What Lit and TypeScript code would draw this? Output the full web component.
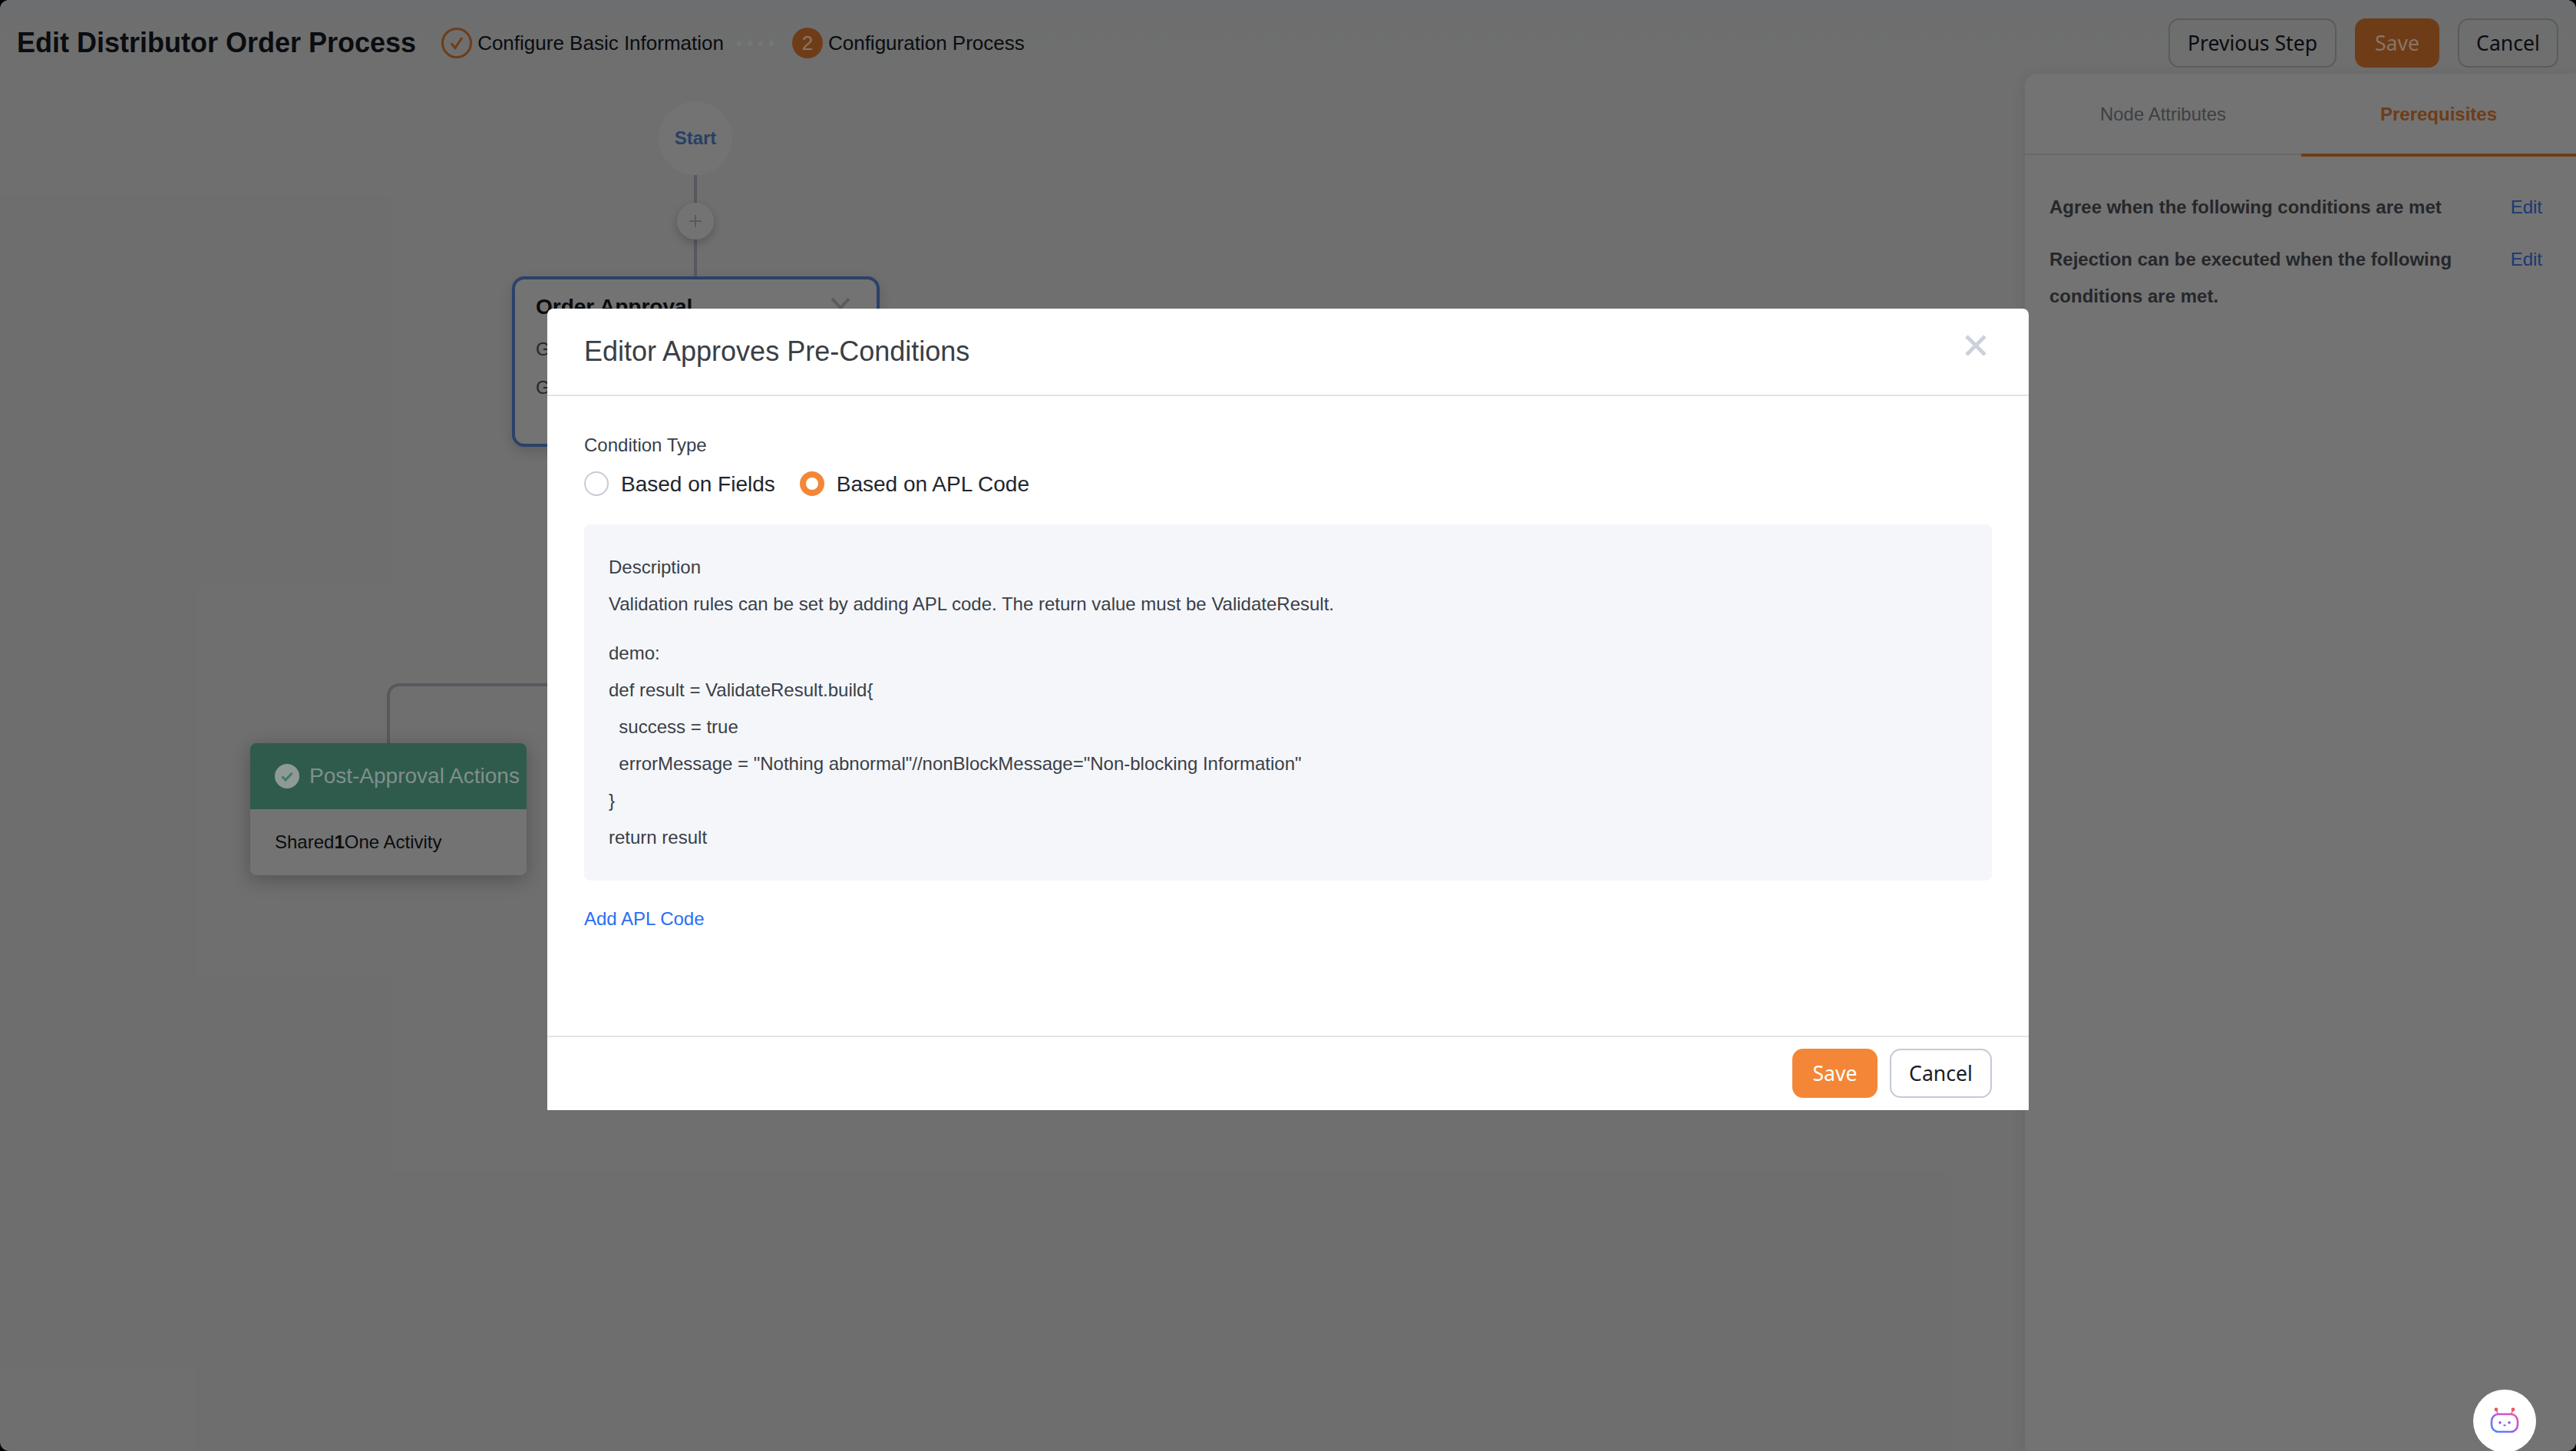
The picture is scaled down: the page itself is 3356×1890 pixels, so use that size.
import { LitElement, html, css } from "lit";
import { customElement } from "lit/decorators.js";

@customElement("app-root")
export class AppRoot extends LitElement {
  static styles = css`
    :host { display: block; width: 100%; height: 100vh; position: relative; overflow: hidden; background: #000; font-family: "Liberation Sans", Arial, sans-serif; }
    * { box-sizing: border-box; }
    .page { height: 100%; display: flex; flex-direction: column; background: #f5f5f5; border-radius: 12px; overflow: hidden; }
    .top { height: 96px; flex: none; display: flex; align-items: center; padding: 16px 23px 0 22px; background: linear-gradient(#f2f4f7, #f5f5f5); }
    .title { font-size: 36px; font-weight: 700; color: #181c25; margin-right: 33px; white-space: nowrap; }
    .step { display: flex; align-items: center; gap: 7px; font-size: 26px; color: #181c25; white-space: nowrap; }
    .ic { width: 40px; height: 40px; border-radius: 50%; display: flex; align-items: center; justify-content: center; }
    .ic.done { border: 3px solid #f38737; }
    .ic.now { background: #f38737; font-size: 26px; }
    .raised { position: relative; z-index: 1; }
    .ic.now span { color: #8a7565; }
    .dots { display: flex; gap: 8px; margin: 0 24px 0 17px; }
    .dots i { width: 6px; height: 7px; border-radius: 50%; background: #747679; }
    .spacer { flex: 1; }
    .btn { height: 64px; border-radius: 14px; border: 2px solid #c5cad6; background: #fff; color: #181c25; font-family: "Noto Sans", sans-serif; font-size: 26.6px; display: flex; align-items: center; justify-content: center; }
    .btn.pri { background: #f38737; border-color: #f38737; color: #fff; }
    .top .prev { width: 219px; margin-right: 24px; background: transparent; }
    .top .sv { width: 110px; margin-right: 24px; }
    .top .sv span { color: #8a7565; }
    .top .cn { width: 131px; background: transparent; }
    .main { flex: 1; display: flex; min-height: 0; }
    .canvas { flex: 1; position: relative; }
    .startn { position: absolute; left: 858px; top: 36px; width: 96px; height: 96px; border-radius: 50%; background: #fff; display: flex; align-items: center; justify-content: center; color: #5a8ee0; font-size: 24px; font-weight: 700; }
    .vline { position: absolute; left: 904px; width: 4px; background: #bfc5cf; }
    .plus { position: absolute; left: 882px; top: 168px; width: 48px; height: 48px; border-radius: 50%; background: #fff; box-shadow: 0 4px 12px rgba(0,0,0,.2); display: flex; align-items: center; justify-content: center; }
    .node { position: absolute; left: 667px; top: 264px; width: 479px; height: 222px; border: 4px solid #5f92e8; border-radius: 16px; background: #fff; padding: 16px 27px; box-shadow: 0 6px 16px rgba(0,0,0,.15); }
    .node .nm { font-size: 28px; font-weight: 700; color: #181c25; line-height: 40px; margin-bottom: 10px; }
    .node .chev { position: absolute; right: 34px; top: 23px; }
    .node .g { font-size: 24px; color: #555; line-height: 50px; }
    .conn { position: absolute; left: 504px; top: 794px; width: 300px; height: 78px; border-left: 4px solid #bfc5cf; border-top: 4px solid #bfc5cf; border-top-left-radius: 16px; }
    .card { position: absolute; left: 326px; top: 872px; width: 360px; height: 172px; border-radius: 8px; background: #fff; box-shadow: 0 6px 24px rgba(0,0,0,.25); overflow: hidden; }
    .card .hd { height: 86px; background: #68c9ac; display: flex; align-items: center; gap: 13px; padding-left: 32px; font-size: 28px; white-space: nowrap; }
    .card .hd span { color: #80908a; }
    .card .bd { height: 86px; display: flex; align-items: center; padding-left: 32px; font-size: 24px; color: #181c25; }
    .card .bd b { font-weight: 700; }
    .panel { width: 718px; flex: none; background: #fff; border-radius: 16px 0 0 0; box-shadow: -4px 0 16px rgba(0,0,0,.06); }
    .tabs { height: 106px; display: flex; border-bottom: 2px solid #e8e9ec; }
    .tab { flex: 1; display: flex; align-items: center; justify-content: center; font-size: 24px; color: #8a8f98; padding-top: 2px; }
    .tab.on { flex: 0 0 358px; color: #f38737; font-weight: 700; border-bottom: 4px solid #f38737; margin-bottom: -4px; }
    .cond { padding: 0 44px 0 32px; }
    .cond .first { margin-top: 44px; }
    .cond .second { margin-top: 20px; }
    .row { display: flex; justify-content: space-between; font-size: 24px; line-height: 48px; color: #545861; font-weight: 700; }
    .row .t { width: 560px; }
    .row a { color: #3a80ff; font-weight: 400; }
    .mask { position: absolute; inset: 0; background: rgba(0,0,0,.55); }
    .modal { position: absolute; z-index: 2; left: 713px; top: 402px; width: 1930px; height: 1044px; background: #fff; border-radius: 8px 8px 0 0; display: flex; flex-direction: column; }
    .mh { height: 114px; flex: none; border-bottom: 2px solid #e1e3e8; display: flex; align-items: center; justify-content: space-between; padding: 0 55px 0 48px; }
    .mh .tt { font-size: 36px; color: #3a3e46; margin-top: -1px; }
    .mh svg { margin-top: -16px; }
    .mb { flex: 1; padding: 48px 48px 0; }
    .lab { font-size: 24px; color: #3a3f47; line-height: 32px; height: 32px; }
    .radios { display: flex; align-items: center; height: 32px; margin-top: 18px; font-size: 28px; color: #22262e; }
    .radios span.tx { padding-top: 2px; }
    .r { width: 32px; height: 32px; border-radius: 50%; border: 2px solid #c5cad6; margin-right: 16px; flex: none; }
    .r.on { border: 8px solid #f38737; }
    .r2 { margin-left: 32px; }
    .desc { margin-top: 37px; height: 464px; background: #f4f6fa; border-radius: 8px; padding: 32px; font-size: 24px; line-height: 48px; color: #3a3f47; }
    .desc .gap { height: 16px; }
    .add { margin-top: 30px; font-size: 24px; line-height: 40px; color: #2a6df4; }
    .mf { height: 97px; flex: none; border-top: 2px solid #e1e3e8; display: flex; align-items: flex-start; justify-content: flex-end; gap: 16px; padding: 15px 48px 0; }
    .mf .sv { width: 111px; }
    .mf .cn { width: 133px; }
    .bot { position: absolute; z-index: 2; left: 3222px; top: 1810px; width: 82px; height: 82px; border-radius: 50%; background: #fff; display: flex; align-items: center; justify-content: center; }
  `;

  render() {
    return html`
      <div class="page">
        <div class="top">
          <div class="title">Edit Distributor Order Process</div>
          <div class="step">
            <span class="ic done"><svg width="22" height="22" viewBox="0 0 22 22" fill="none" stroke="#f38737" stroke-width="3"><path d="M4 11.5l5 6L18 4"/></svg></span>
            Configure Basic Information
          </div>
          <div class="dots raised"><i></i><i></i><i></i><i></i></div>
          <div class="step"><span class="ic now"><span class="raised">2</span></span>Configuration Process</div>
          <div class="spacer"></div>
          <div class="btn prev">Previous Step</div>
          <div class="btn pri sv"><span class="raised">Save</span></div>
          <div class="btn cn">Cancel</div>
        </div>
        <div class="main">
          <div class="canvas">
            <div class="vline" style="top:132px;height:132px"></div>
            <div class="startn">Start</div>
            <div class="plus"><svg width="20" height="20" viewBox="0 0 20 20" stroke="#c4c8d0" stroke-width="2"><path d="M10 2v16M2 10h16"/></svg></div>
            <div class="node">
              <div class="nm">Order Approval</div>
              <svg class="chev" width="26" height="16" viewBox="0 0 26 16" fill="none" stroke="#c6c9cf" stroke-width="4"><path d="M2 2l11 12L24 2"/></svg>
              <div class="g">G</div>
              <div class="g">G</div>
            </div>
            <div class="conn"></div>
            <div class="card">
              <div class="hd">
                <svg class="raised" width="32" height="32" viewBox="0 0 32 32"><circle cx="16" cy="16" r="16" fill="#8f9a95"/><path d="M9.5 16.5l4.5 4.5 8.5-9" fill="none" stroke="#3c7a66" stroke-width="3"/></svg>
                <span class="raised">Post-Approval Actions</span>
              </div>
              <div class="bd"><span>Shared<b>1</b>One Activity</span></div>
            </div>
          </div>
          <div class="panel">
            <div class="tabs"><div class="tab">Node Attributes</div><div class="tab on">Prerequisites</div></div>
            <div class="cond">
              <div class="row first"><span class="t">Agree when the following conditions are met</span><a>Edit</a></div>
              <div class="row second"><span class="t">Rejection can be executed when the following conditions are met.</span><a>Edit</a></div>
            </div>
          </div>
        </div>
      </div>
      <div class="mask"></div>
      <div class="modal">
        <div class="mh">
          <div class="tt">Editor Approves Pre-Conditions</div>
          <svg width="28" height="28" viewBox="0 0 28 28" stroke="#ccd2dc" stroke-width="5"><path d="M2 2l24 24M26 2L2 26"/></svg>
        </div>
        <div class="mb">
          <div class="lab">Condition Type</div>
          <div class="radios">
            <span class="r"></span><span class="tx">Based on Fields</span>
            <span class="r on r2"></span><span class="tx">Based on APL Code</span>
          </div>
          <div class="desc">
            <div>Description</div>
            <div>Validation rules can be set by adding APL code. The return value must be ValidateResult.</div>
            <div class="gap"></div>
            <div>demo:</div>
            <div>def result = ValidateResult.build{</div>
            <div>&nbsp;&nbsp;success = true</div>
            <div>&nbsp;&nbsp;errorMessage = "Nothing abnormal"//nonBlockMessage="Non-blocking Information"</div>
            <div>}</div>
            <div>return result</div>
          </div>
          <div class="add">Add APL Code</div>
        </div>
        <div class="mf">
          <div class="btn pri sv">Save</div>
          <div class="btn cn">Cancel</div>
        </div>
      </div>
      <div class="bot">
        <svg width="40" height="36" viewBox="0 0 40 36" fill="none">
          <defs><linearGradient id="g" x1="0" y1="1" x2="1" y2="0"><stop offset="0" stop-color="#3f8cff"/><stop offset=".45" stop-color="#9b5cf6"/><stop offset="1" stop-color="#f0559a"/></linearGradient></defs>
          <rect x="3" y="9" width="34" height="23" rx="9" stroke="url(#g)" stroke-width="2.6"/>
          <path d="M11 8L9 3M29 8l2-5" stroke="#ee5a8a" stroke-width="1.5"/>
          <circle cx="9" cy="3" r="2.4" fill="#f0566a"/><circle cx="31" cy="3" r="2.4" fill="#f0566a"/>
          <circle cx="14" cy="20" r="1.8" fill="#7b5cf6"/><circle cx="26" cy="20" r="1.8" fill="#7b5cf6"/>
          <path d="M18.5 23h3l-1.5 1.5z" fill="#7b5cf6" stroke="#7b5cf6"/>
        </svg>
      </div>
    `;
  }
}
